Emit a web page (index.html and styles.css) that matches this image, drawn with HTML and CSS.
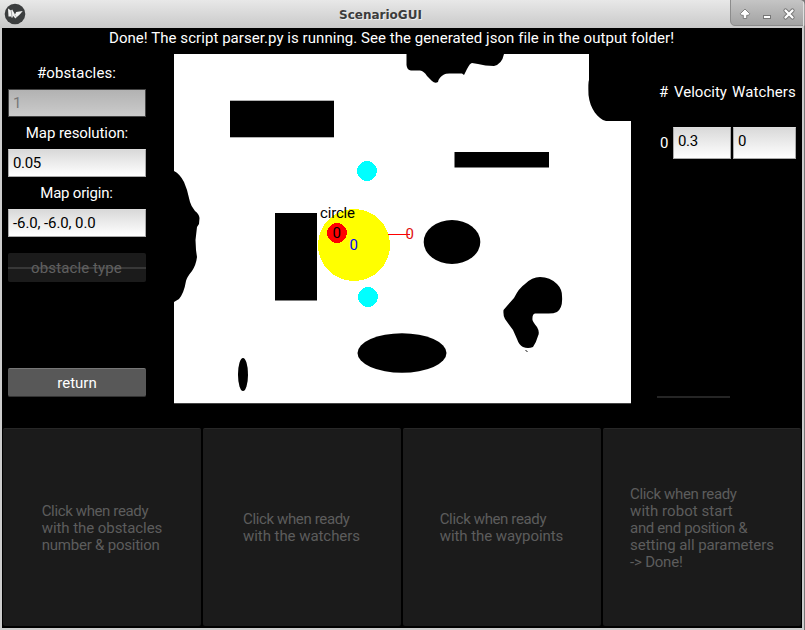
FILE: index.html
```html
<!DOCTYPE html>
<html lang="en">
<head>
<meta charset="utf-8">
<title>ScenarioGUI</title>
<link rel="stylesheet" href="styles.css">
</head>
<body>
<div class="window">
  <header class="titlebar">
    <svg class="logo" width="22" height="22" viewBox="0 0 22 22">
      <circle cx="11" cy="11" r="10.3" fill="#3c3e3f"/>
      <path d="M4 5.500 L7 7.500 L8.200 6.500 L11 11.500 L12.200 9 L18.800 8 L15.500 11.800 L11.200 15.500 L9.500 13 L8 15 L7 13.500 L4.500 13.500 Z" fill="#f4f4f4"/>
      <path d="M7.2 7.5 L8 14 M10.7 12.2 L12.4 13.5" stroke="#77797a" stroke-width=".6" fill="none"/>
    </svg>
    <h1 class="title">ScenarioGUI</h1>
    <div class="controls">
      <svg width="75" height="28" viewBox="0 0 75 28">
        <defs><linearGradient id="tab" x1="0" y1="0" x2="0" y2="1"><stop offset="0" stop-color="#c6c6c6"/><stop offset="1" stop-color="#a2a2a2"/></linearGradient></defs>
        <path d="M.5 -1 V21 Q1 25.500 5 25.500 H75 V-1 Z" fill="url(#tab)" stroke="#8c8c8c"/>
        <path d="M73.500 0 V26" stroke="#e0e0e0"/>
        <path d="M71 0 H75 V5 Q74.500 1 71 0Z" fill="#777"/>
        <path d="M15 9 L19.700 13.700 L18.600 15.300 H16.700 V18.500 H13.300 V15.300 H11.400 L10.300 13.700 Z" fill="#fff" stroke="#777" stroke-width=".9"/>
        <rect x="33.500" y="15.500" width="7" height="3" fill="#fff" stroke="#777"/>
        <path d="M55.500 10.500 L62.500 17.500 M62.500 10.500 L55.500 17.500" stroke="#777" stroke-width="4.200" stroke-linecap="round"/>
        <path d="M55.500 10.500 L62.500 17.500 M62.500 10.500 L55.500 17.500" stroke="#fff" stroke-width="2.300" stroke-linecap="round"/>
      </svg>
    </div>
  </header>
  <main class="client">
    <p class="status">Done! The script parser.py is running. See the generated json file in the output folder!</p>
    <section class="workspace">
      <form class="settings">
        <label class="caption obstacles">#obstacles:</label>
        <div class="field disabled">1</div>
        <label class="caption resolution">Map resolution:</label>
        <div class="field">0.05</div>
        <label class="caption origin">Map origin:</label>
        <div class="field numbers">-6.0, -6.0, 0.0</div>
        <button class="button type" type="button"><span>obstacle type</span></button>
        <button class="button return" type="button"><span>return</span></button>
      </form>
      <svg class="map" width="457" height="350" viewBox="174 54 457 350">
        <rect x="174" y="54" width="457" height="349" fill="#fff"/>
        <rect x="174" y="403" width="457" height="1" fill="#444"/>
        <path d="M406.500 54 V65 Q407 70 411 70.500 H420 Q424 71 427 76 L432 81 Q435 84 438 82 Q439 77 444 74.500 Q446 73 452 73.500 L462 73.500 L464 75 L467 69 Q470 63 472 63 L478 64 Q485 66 494 66 Q502 64 504 54 Z"/>
        <path d="M589 54 V80 Q588 82 588.500 95 C590 109 598 119 606 121 H631 V54 Z"/>
        <path d="M174 171 Q180 174 184 182 L187 190 L190 202 Q191 206 195 211 Q199 214 199.500 218 L199 224 L197 227 L195.500 240 L196 250 L197 257 Q196 265 192 271 Q187 277 186 281 Q184 293 179 299 L174 302 Z"/>
        <path d="M540 277 Q550 277 557 284 Q562 289 562 296 Q563 308 557 312 Q553 314 546 313.500 H535 Q532 314 532.500 320 Q533 322 537 327 Q540 332 538 336 Q536 343 533 347 Q528 349 523 347 Q519 345 517 339 L513 330 L505 319 Q503 316 503.500 310 L514 298 Q519 288 525 284 Q532 277 540 277 Z"/>
        <path d="M525 350.500 H527 M526 351.500 H528" stroke="#555" stroke-width=".7"/>
        <rect x="230" y="100.700" width="104" height="36.600"/>
        <rect x="454.500" y="152" width="94.500" height="15.500"/>
        <rect x="275" y="213" width="42" height="87.500"/>
        <ellipse cx="452" cy="242" rx="28.300" ry="22"/>
        <ellipse cx="402" cy="353" rx="44.500" ry="19.800"/>
        <ellipse cx="243" cy="374.500" rx="5" ry="16.500"/>
        <g shape-rendering="crispEdges">
          <circle cx="354" cy="245" r="36" fill="#ff0"/>
          <circle cx="367" cy="171" r="10" fill="#0ff"/>
          <circle cx="368" cy="297" r="10" fill="#0ff"/>
          <path d="M388 234.500 H410" stroke="#f00"/>
          <circle cx="337" cy="233" r="10" fill="#f00"/>
        </g>
        <g class="marks">
          <text x="320" y="218" textLength="35">circle</text>
          <text x="332.500" y="238">0</text>
          <text x="349.500" y="250" fill="#00f">0</text>
          <text x="405.500" y="239" fill="#e01010">0</text>
        </g>
      </svg>
      <aside class="parameters">
        <div class="row head"><span class="index">#</span><span class="velocity">Velocity</span><span class="watchers">Watchers</span></div>
        <div class="row values"><span class="index">0</span><div class="field cell">0.3</div><div class="field cell wide">0</div></div>
        <div class="handle"></div>
      </aside>
    </section>
    <nav class="steps">
      <button class="step" type="button"><span class="text"><span class="tight">Click when ready</span><br>with the obstacles<br><span class="snug">number &amp; position</span></span></button>
      <button class="step" type="button"><span class="text pair"><span class="tight">Click when ready</span><br>with the watchers</span></button>
      <button class="step" type="button"><span class="text pair"><span class="tight">Click when ready</span><br>with the waypoints</span></button>
      <button class="step" type="button"><span class="text"><span class="tight">Click when ready</span><br><span class="loose">with robot start</span><br><span class="tight">and end position &amp;</span><br>setting all parameters<br><span class="snug">-&gt; Done!</span></span></button>
    </nav>
  </main>
</div>
</body>
</html>
```
FILE: styles.css
```css
* { box-sizing: border-box; }
body { margin: 0; background: #cdcdcd; overflow: hidden; font: 15px/18px Roboto, sans-serif; }
button { font: inherit; border: 0; padding: 0; }
.window { width: 805px; height: 630px; border-right: 1px solid #777; }
.titlebar { display: grid; grid-template-columns: 31px 1fr 74px; height: 28px; background: linear-gradient(#e8e8e8, #c9c9c9); }
.logo { margin: 3px 0 0 4px; }
.title { margin: 6px 0 0 308px; font: bold 12px/18px "DejaVu Sans", sans-serif; color: #3c3c3c; text-shadow: 1px 1px #eee; }
.controls { width: 75px; height: 28px; }
.client { width: 800px; height: 600px; margin-left: 2px; background: #000; color: #fff; }
.status { margin: 0; height: 26px; padding: 1px 0 0 107px; white-space: nowrap; letter-spacing: .055px; }
.workspace { display: grid; grid-template-columns: 172px 457px 1fr; height: 373px; }
.settings { display: flex; flex-direction: column; width: 138px; margin: 9px 0 0 6px; }
.caption { height: 26px; padding-top: 1px; text-align: center; white-space: nowrap; }
.caption.obstacles { letter-spacing: .12px; padding-right: 1px; }
.caption.resolution { letter-spacing: -.08px; }
.caption.origin { letter-spacing: -.2px; padding-right: 1px; }
.field { height: 28px; margin-bottom: 6px; padding: 4px; background: linear-gradient(#d9d9d9, #fff); border: 1px solid #aaa; border-top-color: #ddd; color: #000; white-space: nowrap; letter-spacing: -.35px; }
.field.numbers { letter-spacing: -.1px; }
.field.disabled { background: linear-gradient(#b2b2b2, #cbcbcb); border-color: #444; color: #777; }
.button { height: 29px; border-radius: 2px; text-align: center; }
.button.type { margin-top: 10px; background: linear-gradient(#1b1b1b 14px, #383838 14px, #383838 16px, #1b1b1b 16px); color: #606060; letter-spacing: .12px; padding-right: 1px; }
.button.return { margin-top: 86px; background: #585858; border-top: 1px solid #777; border-bottom: 1px solid #333; color: #fff; }
.map { display: block; }
.marks { font: 15px Roboto, sans-serif; }
.parameters { padding: 29px 0 0 26px; }
.row { display: flex; }
.head { height: 44px; }
.index { width: 16px; padding-left: 3px; }
.head .index { padding-left: 2px; }
.head .velocity { width: 59px; padding-left: 1px; }
.head .watchers { letter-spacing: .1px; }
.values .index { padding-top: 7px; }
.cell { width: 58px; height: 32px; margin: 0 2px 0 0; }
.cell.wide { width: 63px; margin: 0; }
.handle { width: 73px; height: 2px; margin-top: 237px; background: #252525; }
.steps { display: grid; grid-template-columns: repeat(4, 1fr); gap: 2px; height: 200px; padding: 1px 1px; }
.step { display: flex; align-items: center; justify-content: center; background: #1b1b1b; border-top: 1px solid #272727; border-radius: 2px; color: #5d5d5d; text-align: left; line-height: 17px; white-space: nowrap; }
.text { padding-top: 2px; letter-spacing: -.06px; }
.pair { padding: 0 1px 0 0; }
.tight { letter-spacing: -.37px; }
.snug { letter-spacing: -.22px; }
.loose { letter-spacing: .04px; }
```
